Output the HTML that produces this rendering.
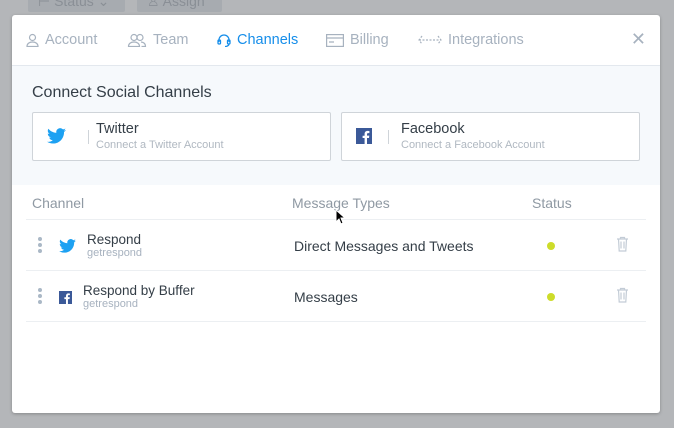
<!DOCTYPE html>
<html><head><meta charset="utf-8"><style>
*{box-sizing:border-box;margin:0;padding:0}
body{width:674px;height:428px;background:#b4b6b9;font-family:"Liberation Sans",sans-serif;position:relative;overflow:hidden}
.bgbtn{position:absolute;top:-10px;height:22px;background:#a7abb0;border-radius:2px;color:#8a8f96;font-size:14px;padding:3px 10px}
.modal{position:absolute;left:12px;top:15px;width:648px;height:398px;background:#fff;border-radius:3px;box-shadow:0 1px 3px rgba(0,0,0,.25)}
.tabs{height:51px;border-bottom:1px solid #e3e8ee;position:relative}
.tab{position:absolute;top:17px;font-size:14.5px;color:#a7b2bf;display:flex;align-items:center;gap:6px}
.tab.on{color:#168eea}
.close{position:absolute;right:14px;top:14px;font-size:18px;color:#a7b2bf}
.conn{background:#f6f9fc;height:119px;padding:18px 20px 0}
.conn h2{font-size:16px;font-weight:normal;color:#343e47;margin-bottom:10px}
.card{position:absolute;top:97px;width:299px;height:49px;background:#fff;border:1px solid #cfd4d9;border-radius:2px}
.card .ic{position:absolute;left:14px;top:15px}
.card .sep{position:absolute;left:55px;top:17px;width:1px;height:14px;background:#cfd4d9}
.card .t{position:absolute;left:63px;top:8px;font-size:14.5px;color:#343e47}
.card .s{position:absolute;left:63px;top:26px;font-size:11px;color:#b0b8c1}
.hd{position:absolute;top:180px;font-size:14px;color:#8f99a3}
.row{position:absolute;left:14px;width:620px;border-top:1px solid #eceff2}
.dots{position:absolute;left:12px}
.dots i{display:block;width:4px;height:4px;border-radius:2px;background:#aab8c6;margin-bottom:2px}
.nm{position:absolute;font-size:13.5px;color:#343e47}
.sub{position:absolute;font-size:11px;color:#a7b2bf}
.mt{position:absolute;left:268px;font-size:14px;color:#343e47}
.st{position:absolute;left:521px;width:8px;height:8px;border-radius:4px;background:#cddc2a}
.tr{position:absolute;left:590px}
</style></head><body>
<div class="bgbtn" style="left:28px;width:97px">⊢ Status ⌄</div>
<div class="bgbtn" style="left:137px;width:85px">♙ Assign ⌄</div>
<div class="modal">
 <div class="tabs">
  <div class="tab" style="left:14px"><svg width="13" height="14" viewBox="0 0 13 14" fill="none" stroke="#a7b2bf" stroke-width="1.2"><circle cx="6.5" cy="4.5" r="3"/><path d="M1 13.5c0-3 2.5-4.5 5.5-4.5s5.5 1.5 5.5 4.5z"/></svg>Account</div>
  <div class="tab" style="left:115px"><svg width="20" height="14" viewBox="0 0 20 14" fill="none" stroke="#a7b2bf" stroke-width="1.2"><circle cx="7" cy="4.5" r="3"/><path d="M1.5 13.5c0-3 2.5-4.5 5.5-4.5s5.5 1.5 5.5 4.5z"/><circle cx="13" cy="4.5" r="3"/><path d="M14 9c3 .3 4.5 2 4.5 4.5h-4"/></svg>Team</div>
  <div class="tab on" style="left:205px"><svg width="14" height="14" viewBox="0 0 14 14" fill="none" stroke="#168eea" stroke-width="1.3"><path d="M2 9V7a5 5 0 0110 0v2"/><rect x="1" y="7" width="2.5" height="4" rx="1"/><rect x="10.5" y="7" width="2.5" height="4" rx="1"/><path d="M12 11c0 1.5-2 2.5-4 2.5"/></svg>Channels</div>
  <div class="tab" style="left:314px"><svg width="18" height="13" viewBox="0 0 18 13" fill="none" stroke="#a7b2bf" stroke-width="1.2"><rect x=".6" y=".6" width="16.8" height="11.8"/><path d="M.6 4h16.8M3 8h5"/></svg>Billing</div>
  <div class="tab" style="left:406px"><svg width="24" height="12" viewBox="0 0 24 12" fill="none" stroke="#a7b2bf" stroke-width="1.2"><path d="M4 2L1 6l3 4M20 2l3 4-3 4M1 6h22" stroke-dasharray="2 1.5"/></svg>Integrations</div>
  <div class="close">✕</div>
 </div>
 <div class="conn"><h2>Connect Social Channels</h2></div>
 <div class="card" style="left:20px">
  <svg class="ic" width="19" height="16" viewBox="0 0 24 20"><path fill="#1da1f2" d="M24 2.4a9.8 9.8 0 01-2.8.8A4.9 4.9 0 0023.3.5a9.9 9.9 0 01-3.1 1.2A4.9 4.9 0 0011.8 6 14 14 0 011.7.9a4.9 4.9 0 001.5 6.6 4.9 4.9 0 01-2.2-.6 4.9 4.9 0 003.9 4.9 4.9 4.9 0 01-2.2.1 4.9 4.9 0 004.6 3.4A9.9 9.9 0 010 17.3 14 14 0 007.5 19.5c9.1 0 14-7.5 14-14v-.6A10 10 0 0024 2.4z"/></svg>
  <div class="sep"></div><div class="t">Twitter</div><div class="s">Connect a Twitter Account</div>
 </div>
 <div class="card" style="left:329px">
  <svg class="ic" width="16" height="16" viewBox="0 0 16 16"><rect width="16" height="16" fill="#3b5998"/><path fill="#fff" d="M11 16V10h2l.3-2.4H11V6.2c0-.7.2-1.1 1.2-1.1h1.2V3a16 16 0 00-1.8-.1c-1.8 0-3 1.1-3 3.1v1.7h-2V10h2v6z"/></svg>
  <div class="sep" style="left:46px"></div><div class="t" style="left:59px">Facebook</div><div class="s" style="left:59px">Connect a Facebook Account</div>
 </div>
 <div class="hd" style="left:20px">Channel</div>
 <div class="hd" style="left:280px">Message Types</div>
 <div class="hd" style="left:520px">Status</div>
 <div class="row" style="top:204px;height:52px">
  <div class="dots" style="top:17px"><i></i><i></i><i></i></div>
  <svg style="position:absolute;left:33px;top:19px" width="17" height="14" viewBox="0 0 24 20"><path fill="#1da1f2" d="M24 2.4a9.8 9.8 0 01-2.8.8A4.9 4.9 0 0023.3.5a9.9 9.9 0 01-3.1 1.2A4.9 4.9 0 0011.8 6 14 14 0 011.7.9a4.9 4.9 0 001.5 6.6 4.9 4.9 0 01-2.2-.6 4.9 4.9 0 003.9 4.9 4.9 4.9 0 01-2.2.1 4.9 4.9 0 004.6 3.4A9.9 9.9 0 010 17.3 14 14 0 007.5 19.5c9.1 0 14-7.5 14-14v-.6A10 10 0 0024 2.4z"/></svg>
  <div class="nm" style="left:61px;top:12px">Respond</div>
  <div class="sub" style="left:61px;top:27px">getrespond</div>
  <div class="mt" style="top:18px">Direct Messages and Tweets</div>
  <div class="st" style="top:22px"></div>
  <svg class="tr" style="top:16px" width="13" height="16" viewBox="0 0 13 16" fill="none" stroke="#c3ccd6" stroke-width="1.2"><path d="M1 3h11M4.5 3V1.5h4V3M2.5 3l.7 12h6.6l.7-12M5 5.5v7M8 5.5v7"/></svg>
 </div>
 <div class="row" style="top:255px;height:52px;border-bottom:1px solid #eceff2">
  <div class="dots" style="top:17px"><i></i><i></i><i></i></div>
  <svg style="position:absolute;left:33px;top:20px" width="13" height="13" viewBox="0 0 16 16"><rect width="16" height="16" fill="#3b5998"/><path fill="#fff" d="M11 16V10h2l.3-2.4H11V6.2c0-.7.2-1.1 1.2-1.1h1.2V3a16 16 0 00-1.8-.1c-1.8 0-3 1.1-3 3.1v1.7h-2V10h2v6z"/></svg>
  <div class="nm" style="left:57px;top:12px">Respond by Buffer</div>
  <div class="sub" style="left:57px;top:27px">getrespond</div>
  <div class="mt" style="top:18px">Messages</div>
  <div class="st" style="top:22px"></div>
  <svg class="tr" style="top:16px" width="13" height="16" viewBox="0 0 13 16" fill="none" stroke="#c3ccd6" stroke-width="1.2"><path d="M1 3h11M4.5 3V1.5h4V3M2.5 3l.7 12h6.6l.7-12M5 5.5v7M8 5.5v7"/></svg>
 </div>
</div>
<svg style="position:absolute;left:335px;top:209px" width="10" height="16" viewBox="0 0 10 16"><path d="M1 1v12l3-3 2 5 2-1-2-5h4z" fill="#000" stroke="#fff" stroke-width="1"/></svg>
</body></html>
